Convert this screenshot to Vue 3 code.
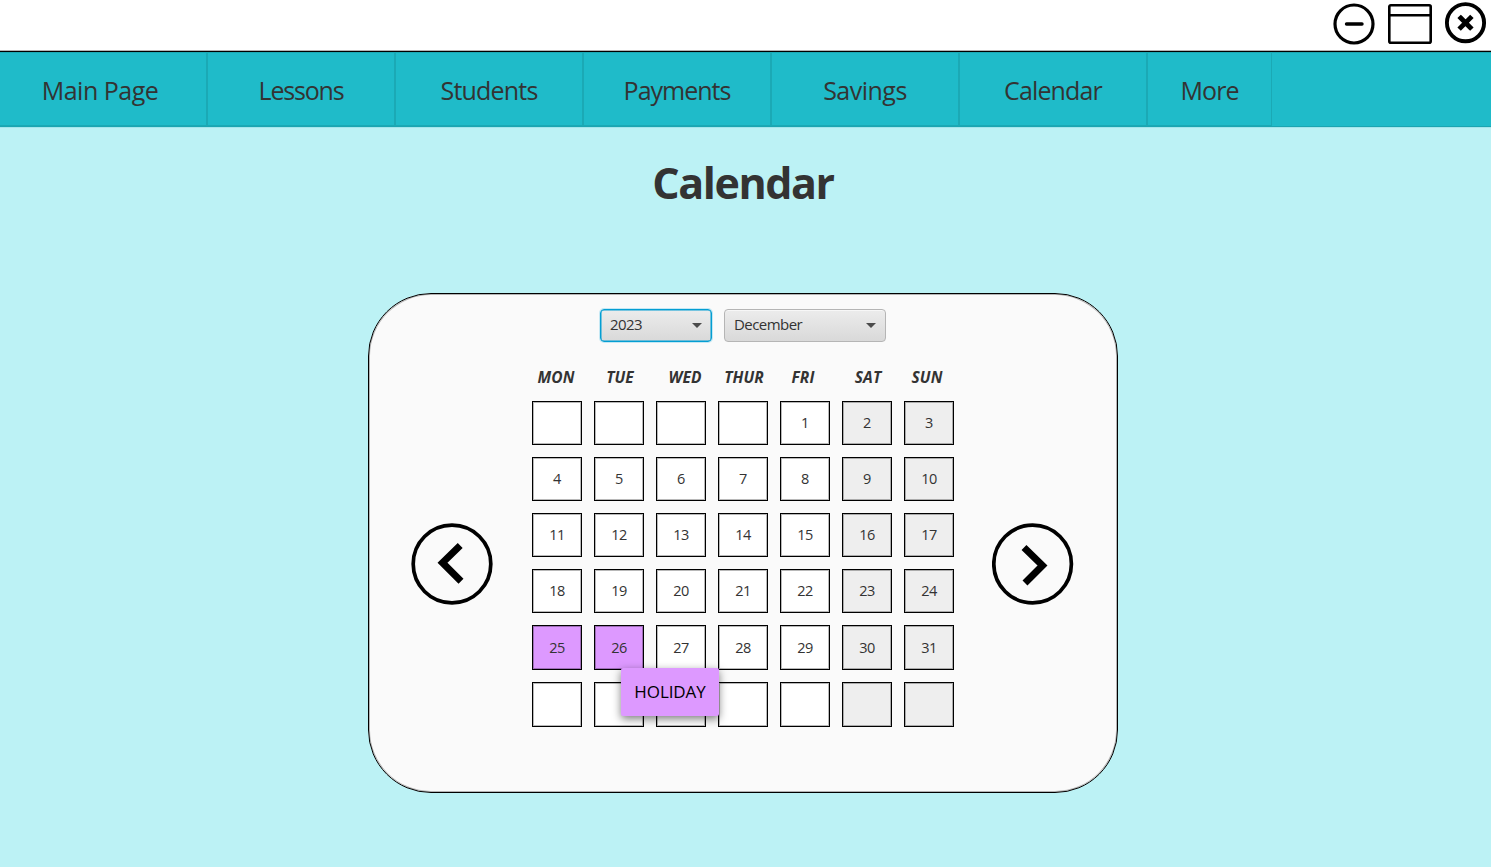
<script setup>
const navItems = [
  { label: 'Main Page', kind: 'first', spacing: -0.5 },
  { label: 'Lessons', kind: '', spacing: -1.2 },
  { label: 'Students', kind: '', spacing: -0.8 },
  { label: 'Payments', kind: '', spacing: -1 },
  { label: 'Savings', kind: '', spacing: -0.5 },
  { label: 'Calendar', kind: '', spacing: -0.85 },
  { label: 'More', kind: 'last', spacing: -0.9 },
]

const weekdays = [
  { label: 'MON', shift: -1 },
  { label: 'TUE', shift: 1 },
  { label: 'WED', shift: 4 },
  { label: 'THUR', shift: 1 },
  { label: 'FRI', shift: -2 },
  { label: 'SAT', shift: 1 },
  { label: 'SUN', shift: -2 },
]

const firstOffset = 4
const daysInMonth = 31
const holidays = [25, 26]

const cells = Array.from({ length: 42 }, (_, i) => {
  const day = i - firstOffset + 1
  return {
    day: day >= 1 && day <= daysInMonth ? day : '',
    weekend: i % 7 > 4,
    holiday: holidays.includes(day),
  }
})
</script>

<template>
  <div class="window">
    <header class="titlebar">
      <svg class="controls" width="160" height="50" viewBox="0 0 160 50" fill="none" stroke="#000">
        <circle cx="23" cy="24" r="19" stroke-width="3.2" />
        <path d="M15.5 24H31" stroke-width="3.4" stroke-linecap="round" />
        <rect x="58.3" y="5.3" width="41.4" height="37.4" rx="1.5" stroke-width="2.6" />
        <path d="M58 15.2H100" stroke-width="2.4" />
        <circle cx="134.5" cy="22.7" r="18.6" stroke-width="3.9" />
        <path d="M130.3 17.8L140.7 28.2M140.7 17.8L130.3 28.2" stroke-width="5.4" stroke-linecap="square" transform="translate(12.55 2.05) scale(.9)" />
      </svg>
    </header>

    <nav class="nav">
      <div v-for="item in navItems" :key="item.label" class="nav-item" :class="item.kind">
        <span :style="{ letterSpacing: item.spacing + 'px' }">{{ item.label }}</span>
      </div>
    </nav>

    <main class="page">
      <h1 class="title">Calendar</h1>

      <section class="card">
        <div class="pickers">
          <div class="combo year">
            <span>2023</span>
            <svg width="10" height="5" viewBox="0 0 10 5"><path d="M0 0H10L5 5Z" fill="#4b4b4b" /></svg>
          </div>
          <div class="combo month">
            <span>December</span>
            <svg width="10" height="5" viewBox="0 0 10 5"><path d="M0 0H10L5 5Z" fill="#4b4b4b" /></svg>
          </div>
        </div>

        <div class="body">
          <svg class="arrow" width="82" height="82" viewBox="0 0 82 82" fill="none" stroke="#000">
            <circle cx="41" cy="41" r="38.8" stroke-width="3.7" />
            <path d="M49.2 22.5L31.5 39.8L50 58.3" stroke-width="7" />
          </svg>

          <div class="month-view">
            <div class="weekdays">
              <span v-for="d in weekdays" :key="d.label" :style="{ marginLeft: d.shift * 2 + 'px' }">{{ d.label }}</span>
            </div>
            <div class="grid">
              <div
                v-for="(c, i) in cells"
                :key="i"
                class="cell"
                :class="{ weekend: c.weekend, holiday: c.holiday }"
              >{{ c.day }}</div>
            </div>
            <div class="tooltip">HOLIDAY</div>
          </div>

          <svg class="arrow" width="82" height="82" viewBox="0 0 82 82" fill="none" stroke="#000">
            <circle cx="40.6" cy="41" r="38.8" stroke-width="3.7" />
            <path d="M32 24.5L50.5 42.5L33 60" stroke-width="7" />
          </svg>
        </div>
      </section>
    </main>
  </div>
</template>

<style>
body {
  margin: 0;
  overflow: hidden;
}
</style>

<style scoped>
.window {
  width: 1491px;
  height: 867px;
  display: flex;
  flex-direction: column;
  overflow: hidden;
  background: #bcf2f5;
  color: #333;
  font-family: 'Open Sans', 'Noto Sans', sans-serif;
}

.titlebar {
  height: 50px;
  flex: none;
  display: flex;
  justify-content: flex-end;
  background: #fff;
  border-bottom: 1px solid #b5b5b5;
}

.controls {
  display: block;
}

.nav {
  box-sizing: border-box;
  height: 76px;
  flex: none;
  display: flex;
  background: #1fbbc9;
  border-top: 1px solid #000;
  border-bottom: 1px solid #1ba5b1;
  box-shadow: inset 0 1px #1ba5b1;
}

.nav-item {
  box-sizing: border-box;
  width: 188px;
  padding-top: 1px;
  display: flex;
  align-items: center;
  justify-content: center;
  border: 1px solid #1ba9b5;
  font-size: 25px;
  white-space: nowrap;
}

.nav-item.first {
  width: 207px;
  padding-right: 6px;
  border-left: 0;
}

.nav-item.last {
  width: 125px;
}

.page {
  flex: 1;
  display: flex;
  flex-direction: column;
  align-items: center;
  border-top: 1px solid #a5e6eb;
}

.title {
  margin: 27px 5px 0 0;
  height: 56px;
  line-height: 56px;
  font-size: 43px;
  font-weight: 700;
  letter-spacing: -1.45px;
}

.card {
  box-sizing: border-box;
  width: 750px;
  height: 500px;
  margin: 82px 5px 0 0;
  padding-top: 15px;
  background: #fafafa;
  border: 1px solid #000;
  border-radius: 63px;
  box-shadow: inset 0 0 0 1px rgba(0, 0, 0, 0.28);
}

.pickers {
  display: flex;
  justify-content: center;
  gap: 12px;
}

.combo {
  box-sizing: border-box;
  height: 33px;
  padding: 0 9px;
  display: flex;
  align-items: center;
  justify-content: space-between;
  border: 1px solid #b5b5b5;
  border-radius: 4px;
  background: linear-gradient(#ececec, #d9d9d9);
  box-shadow: inset 0 1px #f7f7f7;
  font-size: 15px;
  letter-spacing: -0.55px;
}

.combo span {
  padding-bottom: 3px;
}

.year {
  width: 112px;
  border-color: #039ed3;
  box-shadow: 0 0 0 1px #c4e8f4, inset 0 0 0 0.5px #039ed3;
}

.month {
  width: 162px;
}

.body {
  display: flex;
  justify-content: center;
  align-items: flex-start;
  padding-top: 22px;
}

.arrow {
  flex: none;
  margin-top: 159px;
}

.arrow:first-child {
  margin-left: -1px;
}

.month-view {
  position: relative;
  width: 422px;
  margin: 0 38px 0 39px;
}

.weekdays {
  display: grid;
  grid-template-columns: repeat(7, 50px);
  column-gap: 12px;
  height: 37px;
  line-height: 26px;
  justify-items: center;
  font-size: 15.5px;
  font-weight: 700;
  font-style: italic;
  letter-spacing: 0.1px;
  white-space: nowrap;
}

.grid {
  display: grid;
  grid-template-columns: repeat(7, 50px);
  grid-template-rows: repeat(4, 44px) repeat(2, 45px);
  gap: 12px;
}

.cell {
  box-sizing: border-box;
  padding-bottom: 1px;
  display: flex;
  align-items: center;
  justify-content: center;
  border: 1px solid #000;
  box-shadow: inset 0 0 0 1px rgba(0, 0, 0, 0.28);
  background: #fff;
  font-size: 14.5px;
  letter-spacing: -0.5px;
}

.cell.weekend {
  background: #eee;
}

.cell.holiday {
  background: #dd99ff;
}

.tooltip {
  position: absolute;
  left: 89px;
  top: 304px;
  width: 98px;
  height: 48px;
  line-height: 48px;
  text-align: center;
  background: #dd99ff;
  border-radius: 2px;
  box-shadow: 0 3px 8px rgba(0, 0, 0, 0.5);
  color: #000;
  font-size: 17px;
  letter-spacing: -0.1px;
}
</style>
